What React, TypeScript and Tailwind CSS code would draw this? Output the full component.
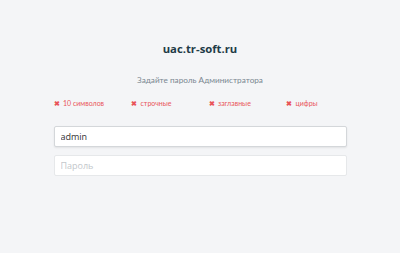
import React from "react";

const rules = ["10 символов", "строчные", "заглавные", "цифры"];

const App: React.FC = () => {
  return (
    <div
      className="h-[253px] w-[400px] bg-[#f4f5f7]"
      style={{ fontFamily: '"Open Sans", sans-serif' }}
    >
      <div className="mx-auto flex w-[293px] flex-col pt-[41px]">
        {/* Domain */}
        <h1 className="text-center text-[11.3px] font-bold leading-[16px] text-[#1f3b47]">
          uac.tr-soft.ru
        </h1>

        <p className="mt-[17px] text-center font-['Lato',sans-serif] text-[8.2px] leading-[12px] text-[#7a8791]">
          Задайте пароль Администратора
        </p>

        {/* Password rules */}
        <div className="mt-[12px] flex font-['Lato',sans-serif]">
          {rules.map((r) => (
            <div
              key={r}
              className="flex w-[77.5px] shrink-0 items-center text-[7px] leading-[10px] text-[#e9555a]"
            >
              <span className="w-[9.5px] text-[7px] font-bold">✖</span>
              <span>{r}</span>
            </div>
          ))}
        </div>

        {/* Inputs */}
        <input
          type="text"
          defaultValue="admin"
          className="mt-[18px] h-[21px] w-full rounded-[2px] border border-[#d4d7da] bg-white px-[6px] text-[9px] text-[#333] shadow-[0_1px_2px_rgba(0,0,0,0.08)] outline-none"
        />
        <input
          type="password"
          placeholder="Пароль"
          className="mt-[8px] h-[21px] w-full rounded-[2px] border border-[#e6e8ea] bg-white px-[6px] text-[9px] text-[#333] outline-none placeholder:text-[#c3c7cb]"
        />
      </div>
    </div>
  );
};

export default App;
